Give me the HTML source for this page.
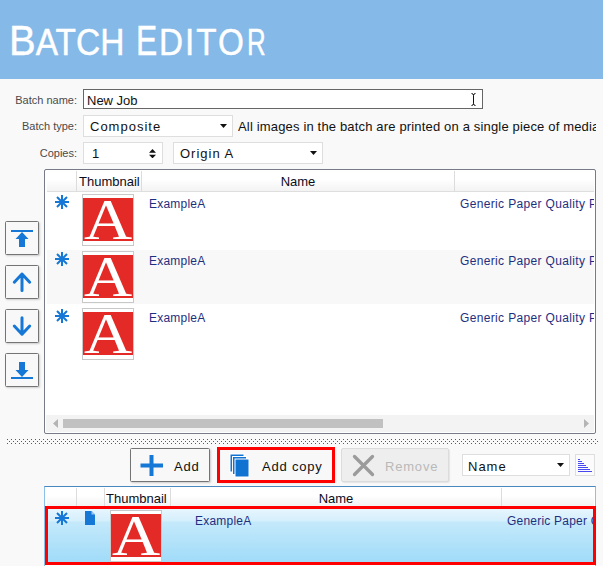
<!DOCTYPE html>
<html><head><meta charset="utf-8">
<style>
html,body{margin:0;padding:0;}
body{width:603px;height:566px;overflow:hidden;background:#f9f9f9;font-family:"Liberation Sans",sans-serif;position:relative;}
.abs{position:absolute;}
#hdr{left:0;top:0;width:603px;height:79px;background:#85b9e8;}
#title{left:0;top:16px;color:#fff;-webkit-text-stroke:0.45px #fff;white-space:nowrap;line-height:48px;height:48px;}
#title .w{position:absolute;top:0;transform-origin:0 0;display:block;white-space:nowrap;}
#title .c{font-size:43px;}
#title .s{font-size:36px;}
.lbl{font-size:11px;color:#4a4a4a;text-align:right;width:77px;left:0;height:16px;line-height:16px;white-space:nowrap;}
.inp{background:#fff;box-sizing:border-box;font-size:13px;color:#111;white-space:nowrap;overflow:hidden;}
.cmb{border:1px solid #dedede;}
.list{background:#fff;border:1px solid #767b87;box-sizing:border-box;overflow:hidden;border-radius:2px;}
.hrow{position:absolute;left:2px;top:1px;right:1px;height:20px;background:linear-gradient(#fff,#fff 40%,#f3f3f3);border-bottom:1px solid #dedede;}
.hcell{position:absolute;top:0;height:20px;line-height:22px;font-size:13px;color:#0c0c20;border-right:1px solid #dcdcdc;box-sizing:border-box;white-space:nowrap;}
.row{position:absolute;left:2px;right:1px;height:54px;overflow:hidden;}
.thumb{position:absolute;width:52px;height:52px;box-sizing:border-box;border:1px solid #c8c8c8;background:#fff;top:1px;}
.thumb .r{position:absolute;left:0;top:3px;width:50px;height:43px;background:#e32a26;overflow:hidden;}
.thumb .r span{position:absolute;left:0;top:-10px;width:50px;text-align:center;font-family:"Liberation Serif",serif;font-size:57px;line-height:64px;color:#fff;transform:scaleX(1.17);}
.txt{position:absolute;font-size:12px;color:#1f2f80;white-space:nowrap;line-height:16px;letter-spacing:0.22px;}
.btn{box-sizing:border-box;border:1px solid #747474;background:#f8f8f8;box-shadow:1px 1px 2px rgba(0,0,0,0.18);border-radius:1.5px;}
.btn svg{position:absolute;left:-1px;top:-1px;}
.btxt{position:absolute;font-size:13px;color:#111;white-space:nowrap;line-height:16px;letter-spacing:0.8px;}
.ast{position:absolute;}
</style></head><body>
<div id="hdr" class="abs"></div>
<div id="title" class="abs"><span class="w" style="left:8.6px;transform:scaleX(0.93);"><span class="c">B</span><span class="s">ATCH</span></span><span class="w" style="left:136.2px;transform:scaleX(0.74);"><span class="c">E</span></span><span class="w" style="left:159.4px;top:3px;transform:scaleX(0.923);letter-spacing:2.17px;"><span class="s">DITO</span></span><span class="w" style="left:246.8px;top:3px;transform:scaleX(0.72);"><span class="s">R</span></span></div>

<div class="abs lbl" style="top:92px;">Batch name:</div>
<div class="abs lbl" style="top:118px;">Batch type:</div>
<div class="abs lbl" style="top:145px;">Copies:</div>

<div class="abs inp" style="left:83px;top:89px;width:400px;height:20px;border:1px solid #666;line-height:19px;padding-left:3px;padding-top:1px;">New Job</div>
<svg class="abs" style="left:469px;top:92px;" width="10" height="15" viewBox="0 0 10 15"><path d="M2.5 1.5 Q4.5 1.5 4.5 3.5 V11.5 Q4.5 13.5 2.5 13.5 M6.5 1.5 Q4.5 1.5 4.5 3.5 M4.5 11.5 Q4.5 13.5 6.5 13.5" fill="none" stroke="#111" stroke-width="1"/></svg>

<div class="abs inp cmb" style="left:83px;top:115px;width:150px;height:22px;line-height:22px;padding-left:6px;letter-spacing:1px;">Composite</div>
<svg class="abs" style="left:220px;top:124px;" width="7" height="4" viewBox="0 0 7 4"><path d="M0 0H7L3.5 4Z" fill="#111"/></svg>
<div class="abs inp cmb" style="left:83px;top:142px;width:80px;height:22px;line-height:22px;padding-left:8px;">1</div>
<svg class="abs" style="left:149.3px;top:148.5px;" width="7" height="9.4" viewBox="0 0 7 9.4"><path d="M0 3.7H7L3.5 0Z M0 5.7H7L3.5 9.4Z" fill="#111"/></svg>
<div class="abs inp cmb" style="left:173px;top:142px;width:150px;height:22px;line-height:22px;padding-left:6px;letter-spacing:1px;">Origin A</div>
<svg class="abs" style="left:309.5px;top:151px;" width="7" height="4" viewBox="0 0 7 4"><path d="M0 0H7L3.5 4Z" fill="#111"/></svg>
<div class="abs" style="left:238px;top:119px;width:358px;overflow:hidden;font-size:13px;color:#111;white-space:nowrap;line-height:16px;letter-spacing:0.165px;">All images in the batch are printed on a single piece of media</div>

<!-- side buttons -->
<div class="abs btn" style="left:5px;top:221px;width:34px;height:34px;"><svg width="34" height="34" viewBox="0 0 34 34"><path d="M6 9H28V11H6Z M17 11L23.5 18H20V26H14V18H10.5Z" fill="#1577d6"/></svg></div>
<div class="abs btn" style="left:5px;top:265px;width:34px;height:34px;"><svg width="34" height="34" viewBox="0 0 34 34"><path d="M17 25.5V9 M9.3 17.2L17 9L24.7 17.2" fill="none" stroke="#1577d6" stroke-width="3" stroke-linecap="round" stroke-linejoin="round"/></svg></div>
<div class="abs btn" style="left:5px;top:309px;width:34px;height:34px;"><svg width="34" height="34" viewBox="0 0 34 34"><path d="M17 8.7V25.2 M9.3 17L17 25.2L24.7 17" fill="none" stroke="#1577d6" stroke-width="3" stroke-linecap="round" stroke-linejoin="round"/></svg></div>
<div class="abs btn" style="left:5px;top:353px;width:34px;height:34px;"><svg width="34" height="34" viewBox="0 0 34 34"><path d="M6 24H28V26H6Z M17 24L23.5 17H20V9H14V17H10.5Z" fill="#1577d6"/></svg></div>

<!-- list 1 -->
<div class="abs list" style="left:44px;top:169px;width:552px;height:265px;">
  <div class="hrow">
    <div class="hcell" style="left:0;width:30px;"></div>
    <div class="hcell" style="left:30px;width:65px;padding-left:2px;">Thumbnail</div>
    <div class="hcell" style="left:95px;width:313px;text-align:center;">Name</div>
  </div>
  <div class="row" style="top:23px;background:#fff;">
    <div class="thumb" style="left:35px;"><div class="r"><span>A</span></div></div>
    <div class="txt" style="left:102px;top:3px;">ExampleA</div>
    <div class="txt" style="left:413px;top:3px;letter-spacing:0.35px;">Generic Paper Quality Paper</div>
  </div>
  <div class="row" style="top:80px;background:#f8f8f8;">
    <div class="thumb" style="left:35px;"><div class="r"><span>A</span></div></div>
    <div class="txt" style="left:102px;top:3px;">ExampleA</div>
    <div class="txt" style="left:413px;top:3px;letter-spacing:0.35px;">Generic Paper Quality Paper</div>
  </div>
  <div class="row" style="top:137px;background:#fff;">
    <div class="thumb" style="left:35px;"><div class="r"><span>A</span></div></div>
    <div class="txt" style="left:102px;top:3px;">ExampleA</div>
    <div class="txt" style="left:413px;top:3px;letter-spacing:0.35px;">Generic Paper Quality Paper</div>
  </div>
  <!-- scrollbar -->
  <div class="abs" style="left:1px;right:1px;top:245px;height:17px;background:#f3f3f3;"></div>
  <div class="abs" style="left:18px;top:249px;width:320px;height:9px;background:#c1c1c1;"></div>
  <svg class="abs" style="left:8px;top:249px;" width="5" height="9" viewBox="0 0 5 9"><path d="M5 0V9L0 4.5Z" fill="#b4b4b4"/></svg>
  <svg class="abs" style="left:539px;top:249px;" width="5" height="9" viewBox="0 0 5 9"><path d="M0 0V9L5 4.5Z" fill="#b4b4b4"/></svg>
</div>

<!-- dotted splitter -->
<svg class="abs" style="left:7px;top:439px;" width="591" height="5"><defs><pattern id="dots" x="0" y="0" width="4" height="4" patternUnits="userSpaceOnUse"><rect x="0" y="0" width="1" height="1" fill="#5a5a5a"/><rect x="2" y="2" width="1" height="1" fill="#5a5a5a"/></pattern></defs><rect width="591" height="5" fill="url(#dots)"/></svg>

<!-- bottom buttons -->
<div class="abs btn" style="left:130px;top:448px;width:80px;height:34px;"><svg width="80" height="34" viewBox="0 0 80 34"><path d="M10.5 15.5H33V19.5H10.5Z M19.5 7H23.5V28H19.5Z" fill="#1577d6"/></svg><div class="btxt" style="left:43px;top:10px;">Add</div></div>
<div class="abs btn" style="left:218px;top:448px;width:116px;height:34px;"><div class="btxt" style="left:43px;top:10px;">Add copy</div></div>
<svg class="abs" style="left:228px;top:452px;" width="24" height="26" viewBox="0 0 24 26"><g fill="#1073d2" stroke="#fff" stroke-width="1"><rect x="2" y="2" width="14" height="18"/><rect x="4.5" y="4.5" width="14" height="18"/><rect x="7" y="7" width="14" height="18"/></g></svg>
<div class="abs" style="left:217px;top:447px;width:118px;height:36px;box-sizing:border-box;border:3px solid #fe0000;"></div>

<div class="abs" style="left:341px;top:448px;width:108px;height:34px;box-sizing:border-box;border:1px solid #dcdcdc;background:#eeeeee;border-radius:2px;box-shadow:1px 1px 1px rgba(0,0,0,0.08);"><svg width="108" height="34" viewBox="0 0 108 34" class="abs" style="left:-1px;top:-1px;"><path d="M13.5 8.5L31.5 26.5 M31.5 8.5L13.5 26.5" fill="none" stroke="#9b9b9b" stroke-width="3.3" stroke-linecap="round"/></svg><div class="btxt" style="left:43px;top:10px;color:#b9b9b9;">Remove</div></div>

<div class="abs inp cmb" style="left:462px;top:454px;width:108px;height:22px;line-height:23px;padding-left:5px;letter-spacing:1px;">Name</div>
<svg class="abs" style="left:556.5px;top:463px;" width="7" height="4" viewBox="0 0 7 4"><path d="M0 0H7L3.5 4Z" fill="#111"/></svg>
<div class="abs" style="left:575px;top:454px;width:20px;height:22px;box-sizing:border-box;border:1px solid #dedede;background:#fbfbfb;"></div>
<svg class="abs" style="left:578px;top:459px;" width="14" height="13" viewBox="0 0 14 13"><g fill="#4848f0"><rect x="0" y="0" width="2" height="1"/><rect x="0" y="2" width="4" height="1"/><rect x="0" y="4" width="6" height="1"/><rect x="0" y="6" width="8" height="1"/><rect x="0" y="8" width="10" height="1"/><rect x="0" y="10" width="12" height="1"/><rect x="0" y="12" width="14" height="1"/></g></svg>

<!-- list 2 -->
<div class="abs" style="left:44px;top:486px;width:552px;height:90px;box-sizing:border-box;border:1px solid #8cc0e8;border-top:1px solid #4c88c0;background:#fff;overflow:hidden;">
  <div class="hrow" style="height:18px;">
    <div class="hcell" style="left:0;width:30px;"></div>
    <div class="hcell" style="left:30px;width:28px;"></div>
    <div class="hcell" style="left:58px;width:66px;padding-left:1px;height:18px;line-height:21px;">Thumbnail</div>
    <div class="hcell" style="left:124px;width:331px;text-align:center;height:18px;line-height:21px;">Name</div>
  </div>
</div>
<div class="abs" style="left:48px;top:509px;width:545px;height:53px;background:linear-gradient(#e7f6fe 0%,#d5effc 22%,#c4e9fb 25%,#a0dbf8 100%);overflow:hidden;">
  <div class="thumb" style="left:62px;top:1px;"><div class="r"><span>A</span></div></div>
  <div class="txt" style="left:147px;top:4px;">ExampleA</div>
  <div class="txt" style="left:459px;top:4px;">Generic Paper Quality Paper</div>
</div>
<svg class="abs" style="left:85px;top:511px;" width="10" height="14" viewBox="0 0 10 14"><path d="M0 0H6.5L10 3.5V14H0Z" fill="#1577d6"/><path d="M6.5 0V3.5H10" fill="#9cc8f0"/></svg>
<div class="abs" style="left:45px;top:506px;width:551px;height:59px;box-sizing:border-box;border:3px solid #fe0000;"></div>

<!-- asterisks -->
<svg width="0" height="0" style="position:absolute"><defs><g id="ast"><path d="M7 0V14 M0 7H14 M2 2L12 12 M12 2L2 12" fill="none" stroke="#1577d6" stroke-width="2"/></g></defs></svg>
<svg class="abs" style="left:55px;top:195px;" width="14" height="14"><use href="#ast"/></svg>
<svg class="abs" style="left:55px;top:252px;" width="14" height="14"><use href="#ast"/></svg>
<svg class="abs" style="left:55px;top:309px;" width="14" height="14"><use href="#ast"/></svg>
<svg class="abs" style="left:55px;top:511px;" width="14" height="14"><use href="#ast"/></svg>
</body></html>
